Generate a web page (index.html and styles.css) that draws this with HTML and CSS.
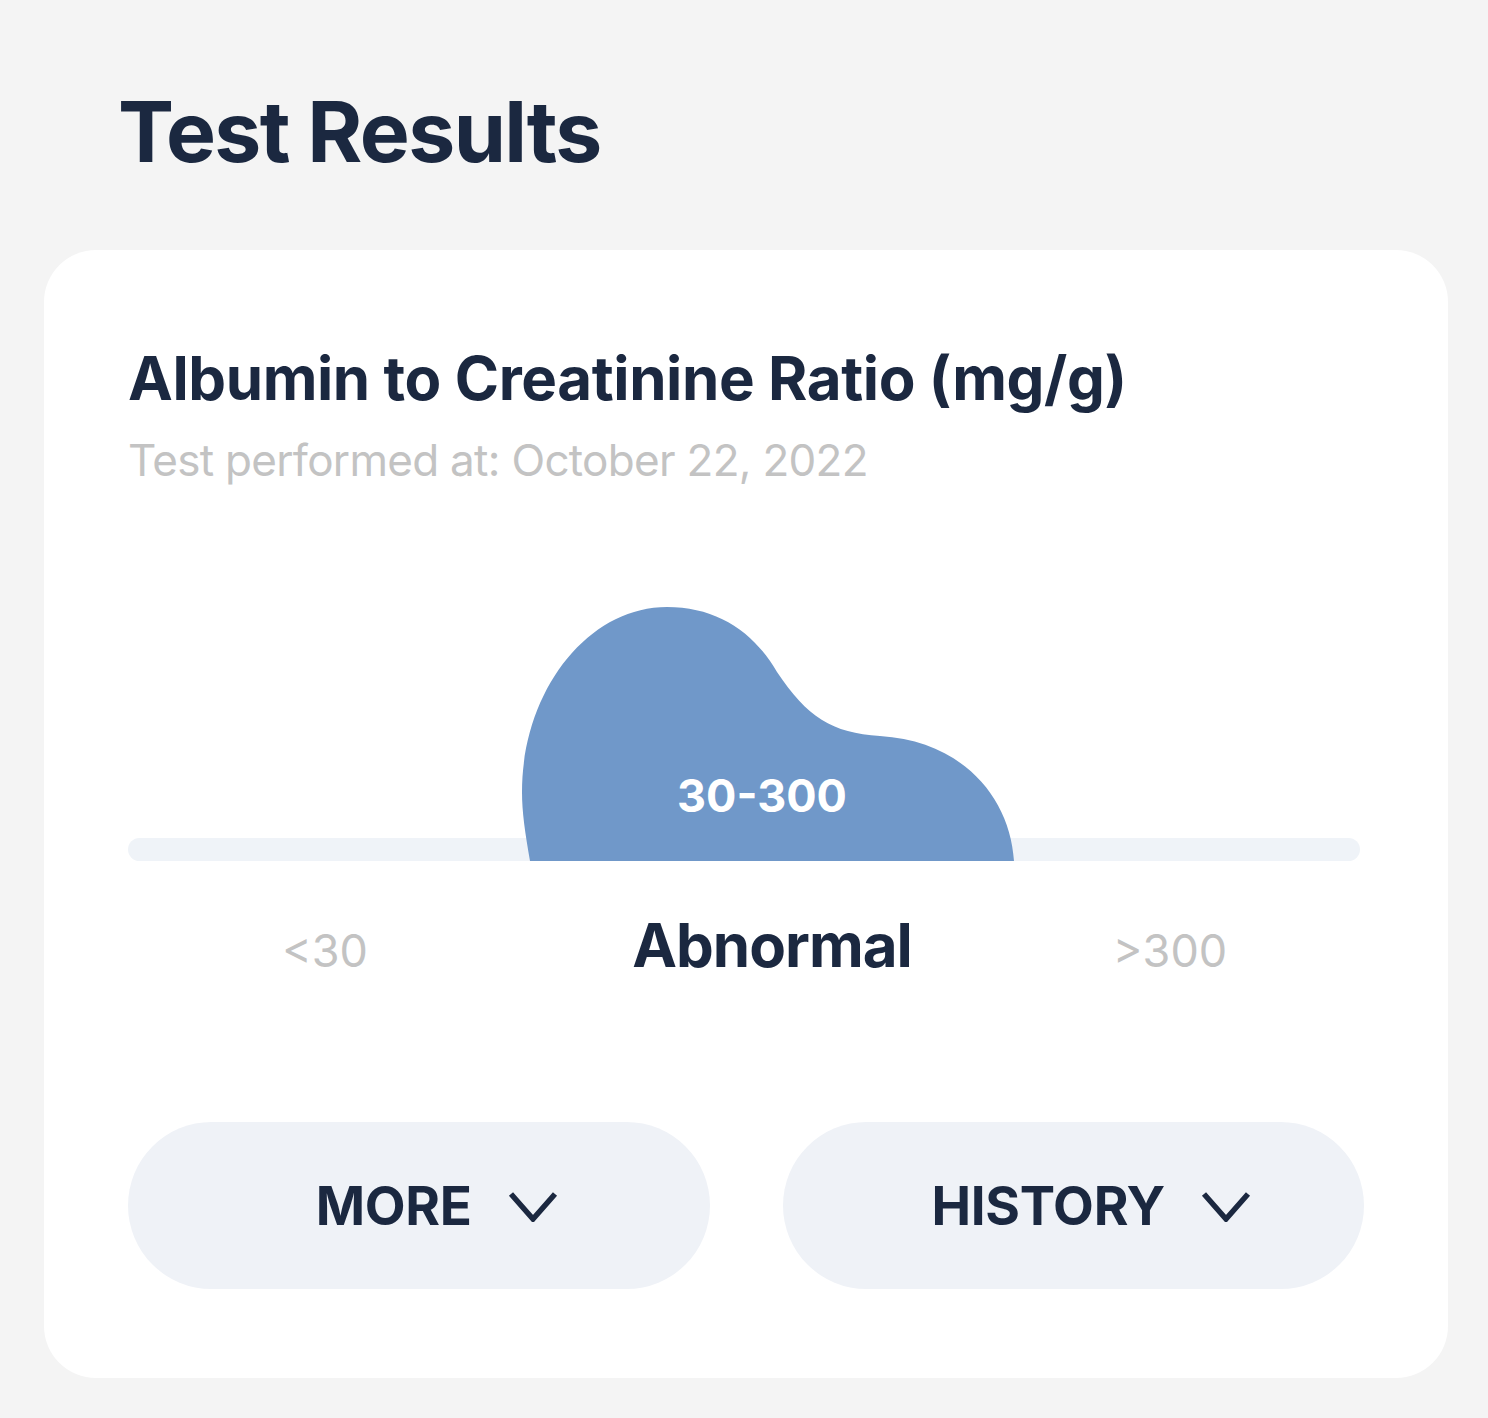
FILE: index.html
```html
<!DOCTYPE html>
<html lang="en">
<head>
<meta charset="utf-8">
<title>Test Results</title>
<link rel="stylesheet" href="styles.css">
</head>
<body>
<main class="page">
  <h1 class="page-title">Test Results</h1>
  <section class="card">
    <h2 class="card-title">Albumin to Creatinine Ratio (mg/g)</h2>
    <p class="card-sub">Test performed at: October 22, 2022</p>
    <div class="chart">
      <div class="bar"></div>
      <div class="blob">
        <svg class="blob-shape" width="492" height="254" viewBox="0 0 492 254" aria-hidden="true">
          <path d="M8,254 C3,225 0,205 0,185 C0,85 65,0 145,0 C195,0 232,25 255,65 C285,110 310,126 358,129 C440,134 488,190 492,254 Z" fill="#7098c9"/>
        </svg>
        <span class="blob-label">30-300</span>
      </div>
    </div>
    <div class="ranges">
      <span class="range range-low">&lt;30</span>
      <span class="range range-current">Abnormal</span>
      <span class="range range-high">&gt;300</span>
    </div>
    <div class="actions">
      <button class="action" type="button">
        <span>MORE</span>
        <svg class="chev" width="50" height="32" viewBox="0 0 50 32" aria-hidden="true"><polyline points="3,4 25,29 47,4" fill="none" stroke="#1b2840" stroke-width="5.5"/></svg>
      </button>
      <button class="action" type="button">
        <span>HISTORY</span>
        <svg class="chev" width="50" height="32" viewBox="0 0 50 32" aria-hidden="true"><polyline points="3,4 25,29 47,4" fill="none" stroke="#1b2840" stroke-width="5.5"/></svg>
      </button>
    </div>
  </section>
</main>
</body>
</html>
```

FILE: styles.css
```css
* { box-sizing: border-box; }

html, body {
  margin: 0;
  padding: 0;
  background: #f4f4f4;
}

body {
  font-family: Inter, "Noto Sans", "Liberation Sans", sans-serif;
  color: #1b2840;
}

.page {
  padding: 90px 40px 40px 44px;
}

.page-title {
  margin: 0 0 76px 74px;
  font-size: 84px;
  line-height: 1;
  font-weight: 700;
  letter-spacing: -1.6px;
}

.card {
  width: 1404px;
  height: 1128px;
  background: #ffffff;
  border-radius: 52px;
  padding: 98px 84px 89px 84px;
  display: flex;
  flex-direction: column;
}

.card-title {
  margin: 0;
  font-size: 60px;
  line-height: 1;
  font-weight: 700;
  letter-spacing: -0.4px;
}

.card-sub {
  margin: 30px 0 0 0;
  font-size: 44px;
  line-height: 1;
  color: #c3c3c3;
  letter-spacing: -0.7px;
}

.chart {
  margin-top: 125px;
  display: grid;
  grid-template-columns: 394px 492px 1fr;
  grid-template-rows: 254px;
  width: 1232px;
}

.bar {
  grid-column: 1 / -1;
  grid-row: 1;
  align-self: end;
  height: 23px;
  border-radius: 12px;
  background: #eff3f8;
}

.blob {
  grid-column: 2;
  grid-row: 1;
  display: grid;
  position: relative;
}

.blob-shape {
  grid-area: 1 / 1;
  display: block;
}

.blob-label {
  grid-area: 1 / 1;
  justify-self: center;
  margin: 166px 12px 0 0;
  color: #ffffff;
  font-size: 45px;
  line-height: 1;
  font-weight: 700;
}

.ranges {
  margin-top: 54px;
  display: grid;
  grid-template-columns: 394px 492px 312px;
  align-items: baseline;
}

.range {
  text-align: center;
  line-height: 1;
}

.range-low, .range-high {
  font-size: 45px;
  color: #c3c3c3;
}

.range-current {
  font-size: 60px;
  font-weight: 700;
  letter-spacing: -1px;
  color: #1b2840;
  padding-left: 8px;
}

.actions {
  margin-top: auto;
  display: flex;
  gap: 73px;
}

.action {
  width: 583px;
  height: 167px;
  border: 0;
  border-radius: 84px;
  background: #eff2f7;
  display: flex;
  align-items: center;
  justify-content: center;
  gap: 36px;
  padding: 0 0 0 36px;
  font-family: Inter, "Noto Sans", "Liberation Sans", sans-serif;
  font-size: 53px;
  font-weight: 700;
  color: #1b2840;
  letter-spacing: -0.3px;
}

.chev {
  display: block;
}
```
